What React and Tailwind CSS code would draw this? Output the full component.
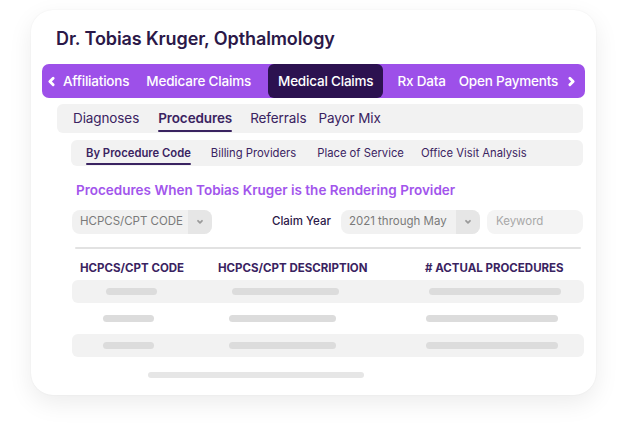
import React from "react";

const Chevron = ({ dir = "left", className = "" }) => (
  <svg viewBox="0 0 10 10" className={className} fill="none" stroke="currentColor" strokeWidth="2.6" strokeLinecap="round" strokeLinejoin="round">
    {dir === "left" ? <path d="M6.5 2 L3.5 5 L6.5 8" /> : <path d="M3.5 2 L6.5 5 L3.5 8" />}
  </svg>
);

const Caret = () => (
  <svg viewBox="0 0 10 10" className="w-[8px] h-[8px] text-[#9a9a9a]" fill="none" stroke="currentColor" strokeWidth="2.2" strokeLinecap="round" strokeLinejoin="round">
    <path d="M2.5 3.5 L5 6 L7.5 3.5" />
  </svg>
);

const Pill = ({ ml, w }) => (
  <div className="h-[7px] rounded-full bg-[#dcdcdc] shrink-0" style={{ marginLeft: ml, width: w }} />
);

const Row = ({ shaded, o = 0 }) => (
  <div className={`h-[23px] flex items-center rounded-[6px] ${shaded ? "bg-[#f2f2f2]" : ""}`}>
    <Pill ml={34 - o} w={51} />
    <Pill ml={75} w={107} />
    <Pill ml={90} w={132} />
  </div>
);

export default function App() {
  return (
    <div className="w-[625px] h-[438px] bg-white pt-[10px] pl-[31px] whitespace-nowrap" style={{ fontFamily: "Inter, 'Noto Sans', sans-serif" }}>
      <div className="w-[565px] h-[385px] bg-white rounded-[22px] shadow-[0_8px_24px_rgba(0,0,0,0.08),0_0_2px_rgba(0,0,0,0.06)] pl-[11px] pr-[11px] pt-[17px]">
        <div className="pl-[14px] text-[18px] font-semibold text-[#2b1848] leading-[24px] tracking-[-0.1px]">
          Dr. Tobias Kruger, Opthalmology
        </div>

        <div className="mt-[13px] h-[34px] bg-[#9d50e9] rounded-[7px] flex items-center text-white text-[13.5px] font-medium tracking-[-0.2px]">
          <Chevron dir="left" className="w-[11px] h-[11px] ml-[4px] shrink-0" />
          <span className="ml-[6px]">Affiliations</span>
          <span className="ml-[17px]">Medicare Claims</span>
          <span className="ml-[17px] h-[34px] px-[10px] bg-[#2c1250] rounded-[6px] flex items-center">Medical Claims</span>
          <span className="ml-[14px]">Rx Data</span>
          <span className="ml-[13px]">Open Payments</span>
          <Chevron dir="right" className="w-[11px] h-[11px] ml-[8px] shrink-0" />
        </div>

        <div className="mt-[6px] ml-[15px] mr-[2px] h-[29px] bg-[#f2f2f2] rounded-[6px] flex items-center text-[13.5px] text-[#3a2361] tracking-[-0.1px]">
          <span className="ml-[16px]">Diagnoses</span>
          <span className="ml-[19px] font-semibold relative h-[29px] flex items-center">
            Procedures
            <span className="absolute left-0 right-0 bottom-[1px] h-[2px] bg-[#3a2361] rounded-full" />
          </span>
          <span className="ml-[18px]">Referrals</span>
          <span className="ml-[12px]">Payor Mix</span>
        </div>

        <div className="mt-[7px] ml-[29px] mr-[2px] h-[26px] bg-[#f2f2f2] rounded-[6px] flex items-center text-[11.25px] text-[#3a2361]">
          <span className="ml-[15px] font-semibold relative h-[26px] flex items-center">
            By Procedure Code
            <span className="absolute left-0 right-0 bottom-[1px] h-[2px] bg-[#3a2361] rounded-full" />
          </span>
          <span className="ml-[20px]">Billing Providers</span>
          <span className="ml-[21px]">Place of Service</span>
          <span className="ml-[17px]">Office Visit Analysis</span>
        </div>

        <div className="mt-[15px] ml-[34px] text-[13.5px] font-semibold text-[#a255ec] leading-[18px]">
          Procedures When Tobias Kruger is the Rendering Provider
        </div>

        <div className="mt-[11px] ml-[30px] flex items-center h-[24px] text-[11.5px]">
          <div className="w-[140px] h-[24px] rounded-[8px] bg-[#f1f1f1] flex items-center overflow-hidden shrink-0">
            <span className="flex-1 pl-[8px] text-[#7a7a7a]">HCPCS/CPT CODE</span>
            <span className="w-[24px] h-[24px] bg-[#e6e6e6] flex items-center justify-center"><Caret /></span>
          </div>
          <span className="ml-[60px] text-[#2b1848] font-medium">Claim Year</span>
          <div className="ml-[10px] w-[139px] h-[24px] rounded-[8px] bg-[#f1f1f1] flex items-center overflow-hidden shrink-0">
            <span className="flex-1 pl-[8px] text-[#7a7a7a]">2021 through May</span>
            <span className="w-[24px] h-[24px] bg-[#e6e6e6] flex items-center justify-center"><Caret /></span>
          </div>
          <div className="ml-[7px] w-[96px] h-[24px] rounded-[8px] bg-[#f4f4f4] flex items-center pl-[9px] text-[#a8a8a8] shrink-0">
            Keyword
          </div>
        </div>

        <div className="mt-[13px] ml-[33px] mr-[4px] h-[2px] bg-[#e2e2e2] rounded-full" />

        <div className="mt-[12px] ml-[30px] mr-[1px]">
          <div className="flex items-center h-[16px] text-[11.5px] font-bold text-[#3a2361]">
            <span className="pl-[8px] w-[146px] shrink-0">HCPCS/CPT CODE</span>
            <span className="w-[207px] shrink-0">HCPCS/CPT DESCRIPTION</span>
            <span>&#35; ACTUAL PROCEDURES</span>
          </div>
          <div className="mt-[3px] flex flex-col gap-[4px]">
            <Row shaded />
            <Row o={3} />
            <Row shaded o={3} />
          </div>
        </div>

        <div className="mt-[15px] ml-[106px] w-[216px] h-[6px] rounded-full bg-[#e6e6e6]" />
      </div>
    </div>
  );
}
